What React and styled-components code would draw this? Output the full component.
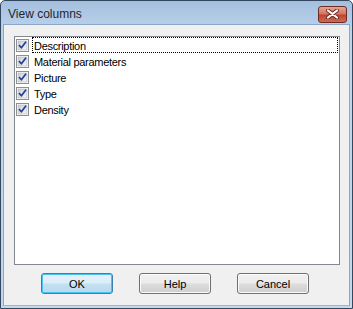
import React from 'react'
import styled, { createGlobalStyle } from 'styled-components'

const GlobalStyle = createGlobalStyle`
  html, body {
    margin: 0;
    padding: 0;
    background: #ffffff;
  }
`

const Window = styled.div`
  width: 353px;
  height: 309px;
  box-sizing: border-box;
  border: 1px solid #33475e;
  border-radius: 5px 5px 0 0;
  background: linear-gradient(#a4bfde, #bcd3ec 30px, #c3d7ee);
  display: flex;
  flex-direction: column;
  padding: 0 2px 2px 2px;
`

const TitleBar = styled.div`
  height: 23px;
  display: flex;
  align-items: center;
  justify-content: space-between;
  padding: 0 3px 0 5px;
`

const Title = styled.span`
  font-family: "Liberation Sans", Arial, sans-serif;
  font-size: 12px;
  color: #1c2630;
  padding-top: 2px;
`

const CloseButton = styled.div`
  width: 29px;
  height: 17px;
  box-sizing: border-box;
  border: 1px solid #6d2b23;
  border-radius: 3px;
  background: linear-gradient(#e6a594, #d47460 45%, #c24430 55%, #cf6b52);
  display: flex;
  align-items: center;
  justify-content: center;
  margin-top: 3px;
`

const Client = styled.div`
  flex: 1;
  background: #f0f0f0;
  border: 1px solid #8aa7c8;
  border-bottom-color: #9db7d4;
  display: flex;
  flex-direction: column;
  padding: 11px 9px 0 10px;
`

const ListBox = styled.div`
  height: 229px;
  box-sizing: border-box;
  border: 1px solid #828790;
  background: #ffffff;
  display: flex;
  flex-direction: column;
  padding-top: 0;
`

const Row = styled.div`
  height: 16px;
  display: flex;
  align-items: center;
  padding-left: 1px;
`

const Label = styled.span`
  flex: 1;
  height: 16px;
  box-sizing: border-box;
  margin: 0 1px 0 3px;
  padding: 1px 1px 0;
  display: flex;
  align-items: center;
  font-family: "Liberation Sans", Arial, sans-serif;
  font-size: 11px;
  letter-spacing: -0.3px;
  color: #000000;
  border: 1px dotted ${(props) => (props.focused ? '#000000' : 'transparent')};
`

const ButtonRow = styled.div`
  display: flex;
  justify-content: center;
  gap: 26px;
  margin-top: 8px;
  padding-right: 4px;
`

const Button = styled.div`
  width: 72px;
  height: 21px;
  box-sizing: border-box;
  border: 1px solid ${(props) => (props.primary ? '#3c7fb1' : '#707070')};
  border-radius: 3px;
  background: ${(props) =>
    props.primary
      ? 'linear-gradient(#e8f3fb, #dbedf8 48%, #c4e1f2 52%, #b5d8ee)'
      : 'linear-gradient(#f2f2f2, #ebebeb 48%, #dddddd 52%, #cfcfcf)'};
  box-shadow: ${(props) =>
    props.primary ? 'inset 0 0 0 1px #48c3f3' : 'inset 0 0 0 1px #fbfbfb'};
  display: flex;
  align-items: center;
  justify-content: center;
  font-family: "Liberation Sans", Arial, sans-serif;
  font-size: 11px;
  color: #000000;
`

const CheckBox = () => (
  <svg width="13" height="13" viewBox="0 0 13 13">
    <defs>
      <linearGradient id="cbfill" x1="0" y1="0" x2="1" y2="1">
        <stop offset="0" stopColor="#cbcfd5" />
        <stop offset="1" stopColor="#f4f5f7" />
      </linearGradient>
    </defs>
    <rect x="0.5" y="0.5" width="12" height="12" fill="#ffffff" stroke="#8e8f8f" />
    <rect x="2" y="2" width="9" height="9" fill="url(#cbfill)" stroke="#aeb3b9" strokeWidth="0.6" />
    <path d="M3 6.2 L5.4 8.8 L10 2.8" fill="none" stroke="#1f3d97" strokeWidth="1.7" />
  </svg>
)

const CloseIcon = () => (
  <svg width="15" height="10" viewBox="0 0 15 10">
    <path d="M3 1.5 L12 8.5 M12 1.5 L3 8.5" stroke="#6a2a22" strokeWidth="4" strokeLinecap="round" />
    <path d="M3 1.5 L12 8.5 M12 1.5 L3 8.5" stroke="#ffffff" strokeWidth="2.2" strokeLinecap="round" />
  </svg>
)

const columns = ['Description', 'Material parameters', 'Picture', 'Type', 'Density']

export default function App() {
  return (
    <>
      <GlobalStyle />
      <Window>
        <TitleBar>
          <Title>View columns</Title>
          <CloseButton>
            <CloseIcon />
          </CloseButton>
        </TitleBar>
        <Client>
          <ListBox>
            {columns.map((name, i) => (
              <Row key={name}>
                <CheckBox />
                <Label focused={i === 0}>{name}</Label>
              </Row>
            ))}
          </ListBox>
          <ButtonRow>
            <Button primary>OK</Button>
            <Button>Help</Button>
            <Button>Cancel</Button>
          </ButtonRow>
        </Client>
      </Window>
    </>
  )
}
